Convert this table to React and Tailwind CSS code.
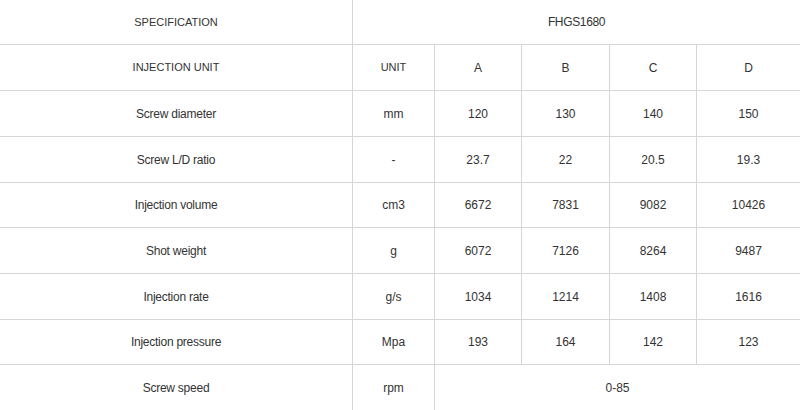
export default function App() {
  const rowH = ["h-[46px]", "h-[46px]", "h-[45px]", "h-[46px]", "h-[46px]", "h-[45px]", "h-[46px]"];
  const rows = [
    ["Screw diameter", "mm", "120", "130", "140", "150"],
    ["Screw L/D ratio", "-", "23.7", "22", "20.5", "19.3"],
    ["Injection volume", "cm3", "6672", "7831", "9082", "10426"],
    ["Shot weight", "g", "6072", "7126", "8264", "9487"],
    ["Injection rate", "g/s", "1034", "1214", "1408", "1616"],
    ["Injection pressure", "Mpa", "193", "164", "142", "123"],
  ];
  const widths = ["w-[353px]", "w-[82px]", "w-[87px]", "w-[88px]", "w-[87px]", "w-[103px]"];
  const cell = "flex items-center justify-center shrink-0 h-full";
  const br = "border-r border-[#d6d6d6]";
  return (
    <div
      className="w-[800px] h-[410px] bg-white text-[#333] text-[12px] overflow-hidden"
      style={{ fontFamily: '"Liberation Sans", Arial, sans-serif' }}
    >
      <div className="flex h-[45px] border-b border-[#d6d6d6]">
        <div className={`${cell} w-[353px] ${br} text-[11px]`}>SPECIFICATION</div>
        <div className={`${cell} flex-1 tracking-[-0.35px]`}>FHGS1680</div>
      </div>
      <div className="flex h-[46px] border-b border-[#d6d6d6]">
        {["INJECTION UNIT", "UNIT", "A", "B", "C", "D"].map((t, i) => (
          <div
            key={i}
            className={`${cell} ${widths[i]} ${i < 5 ? br : ""} ${i < 2 ? "text-[11px]" : ""}`}
          >
            {t}
          </div>
        ))}
      </div>
      {rows.map((r, ri) => (
        <div key={ri} className={`flex ${rowH[ri]} border-b border-[#d6d6d6]`}>
          {r.map((t, i) => (
            <div
              key={i}
              className={`${cell} ${widths[i]} ${i < 5 ? br : ""} ${i === 0 ? "tracking-[-0.25px]" : ""}`}
            >
              {t}
            </div>
          ))}
        </div>
      ))}
      <div className="flex h-[45px]">
        <div className={`${cell} w-[353px] ${br} tracking-[-0.25px]`}>Screw speed</div>
        <div className={`${cell} w-[82px] ${br}`}>rpm</div>
        <div className={`${cell} flex-1`}>0-85</div>
      </div>
    </div>
  );
}
